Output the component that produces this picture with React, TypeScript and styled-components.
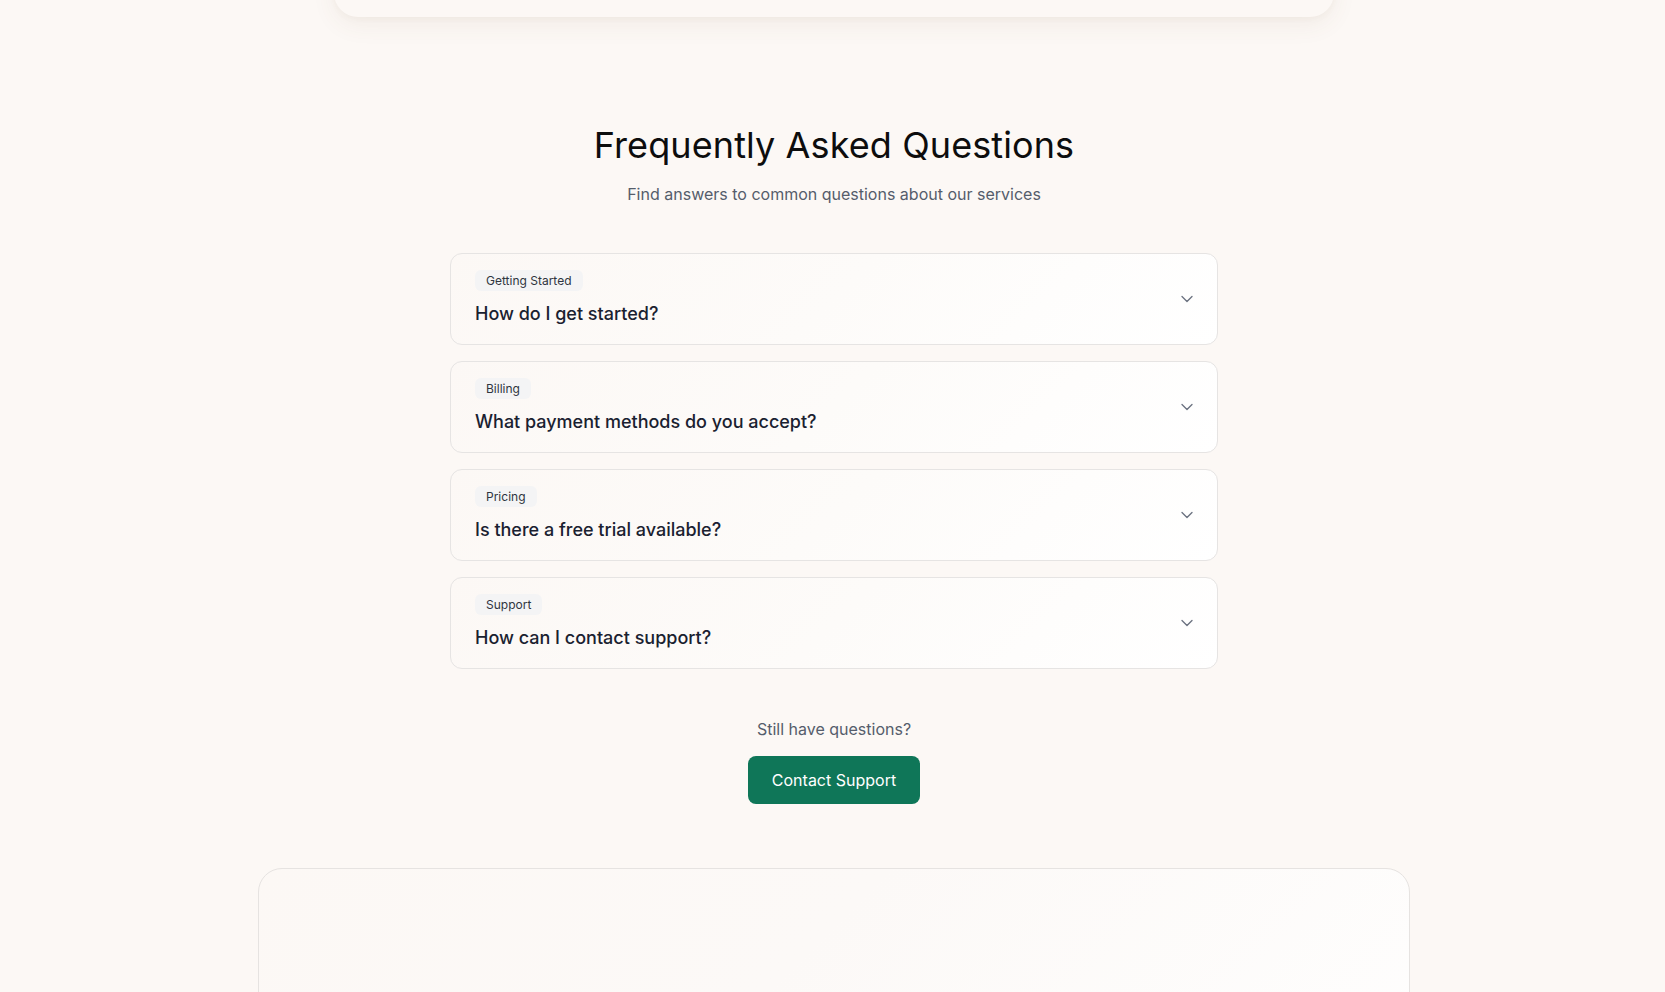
import React from "react";
import styled, { createGlobalStyle } from "styled-components";
import { ChevronDown } from "lucide-react";

const GlobalStyle = createGlobalStyle`
  html, body {
    margin: 0;
    padding: 0;
    background: #fcf8f5;
  }
  body {
    font-family: Inter, "Noto Sans", sans-serif;
    color: #111827;
    -webkit-font-smoothing: antialiased;
  }
  * { box-sizing: border-box; }
`;

const Page = styled.div`
  display: flex;
  flex-direction: column;
  align-items: center;
  min-height: 100vh;
  padding-left: 3px;
`;

const TopStrip = styled.div`
  width: 100%;
  height: 17px;
  display: flex;
  flex-direction: column;
  justify-content: flex-end;
  align-items: center;
`;

const TopCard = styled.div`
  flex: none;
  width: 1000px;
  height: 240px;
  background: #fcf8f5;
  border-radius: 24px;
  box-shadow: 0 8px 24px rgba(120, 90, 60, 0.07), 0 2px 6px rgba(120, 90, 60, 0.04);
`;

const FaqSection = styled.section`
  width: 768px;
  padding-top: 108px;
  display: flex;
  flex-direction: column;
  align-items: center;
`;

const Title = styled.h2`
  margin: 0;
  font-size: 36px;
  line-height: 40px;
  font-weight: 400;
  color: #0d0d0d;
  letter-spacing: 0.1px;
`;

const Subtitle = styled.p`
  margin: 15px 0 0;
  font-size: 16px;
  line-height: 28px;
  color: #555d6b;
`;

const List = styled.div`
  width: 100%;
  margin-top: 45px;
  display: flex;
  flex-direction: column;
  gap: 16px;
`;

const Item = styled.div`
  display: flex;
  align-items: center;
  justify-content: space-between;
  padding: 16px 24px;
  border: 1px solid #e6e4e3;
  border-radius: 12px;
  background: linear-gradient(135deg, #fcf8f5 0%, #fdfbf9 50%, #ffffff 100%);
  cursor: pointer;
`;

const ItemText = styled.div`
  display: flex;
  flex-direction: column;
  align-items: flex-start;
  gap: 9px;
`;

const Badge = styled.span`
  display: inline-flex;
  align-items: center;
  height: 21px;
  padding: 0 11px;
  border-radius: 6px;
  background: #f4f4f5;
  color: #2f3540;
  font-size: 12px;
  line-height: 16px;
`;

const Question = styled.h3`
  margin: 0;
  font-size: 18px;
  line-height: 28px;
  font-weight: 500;
  color: #1a2130;
`;

const Chevron = styled(ChevronDown)`
  flex: none;
  color: #6b7280;
  margin-right: -4px;
`;

const Footer = styled.div`
  margin-top: 46px;
  display: flex;
  flex-direction: column;
  align-items: center;
  gap: 13px;
`;

const FooterText = styled.p`
  margin: 0;
  font-size: 16px;
  line-height: 28px;
  color: #555d6b;
`;

const PrimaryButton = styled.button`
  height: 48px;
  padding: 0 24px;
  border: none;
  border-radius: 8px;
  background: #0f7658;
  color: #ffffff;
  font-family: inherit;
  font-size: 16px;
  line-height: 24px;
  cursor: pointer;
`;

const BottomCard = styled.div`
  width: 1152px;
  height: 420px;
  margin-top: 64px;
  border: 1px solid #e6e3e1;
  border-radius: 24px;
  background: linear-gradient(135deg, #fcf8f5 0%, #fcf9f7 40%, #ffffff 100%);
`;

const faqs = [
  { tag: "Getting Started", q: "How do I get started?" },
  { tag: "Billing", q: "What payment methods do you accept?" },
  { tag: "Pricing", q: "Is there a free trial available?" },
  { tag: "Support", q: "How can I contact support?" },
];

export default function App() {
  return (
    <>
      <GlobalStyle />
      <Page>
        <TopStrip>
          <TopCard />
        </TopStrip>
        <FaqSection>
          <Title>Frequently Asked Questions</Title>
          <Subtitle>Find answers to common questions about our services</Subtitle>
          <List>
            {faqs.map((f) => (
              <Item key={f.q}>
                <ItemText>
                  <Badge>{f.tag}</Badge>
                  <Question>{f.q}</Question>
                </ItemText>
                <Chevron size={20} strokeWidth={1.6} />
              </Item>
            ))}
          </List>
          <Footer>
            <FooterText>Still have questions?</FooterText>
            <PrimaryButton>Contact Support</PrimaryButton>
          </Footer>
        </FaqSection>
        <BottomCard />
      </Page>
    </>
  );
}
